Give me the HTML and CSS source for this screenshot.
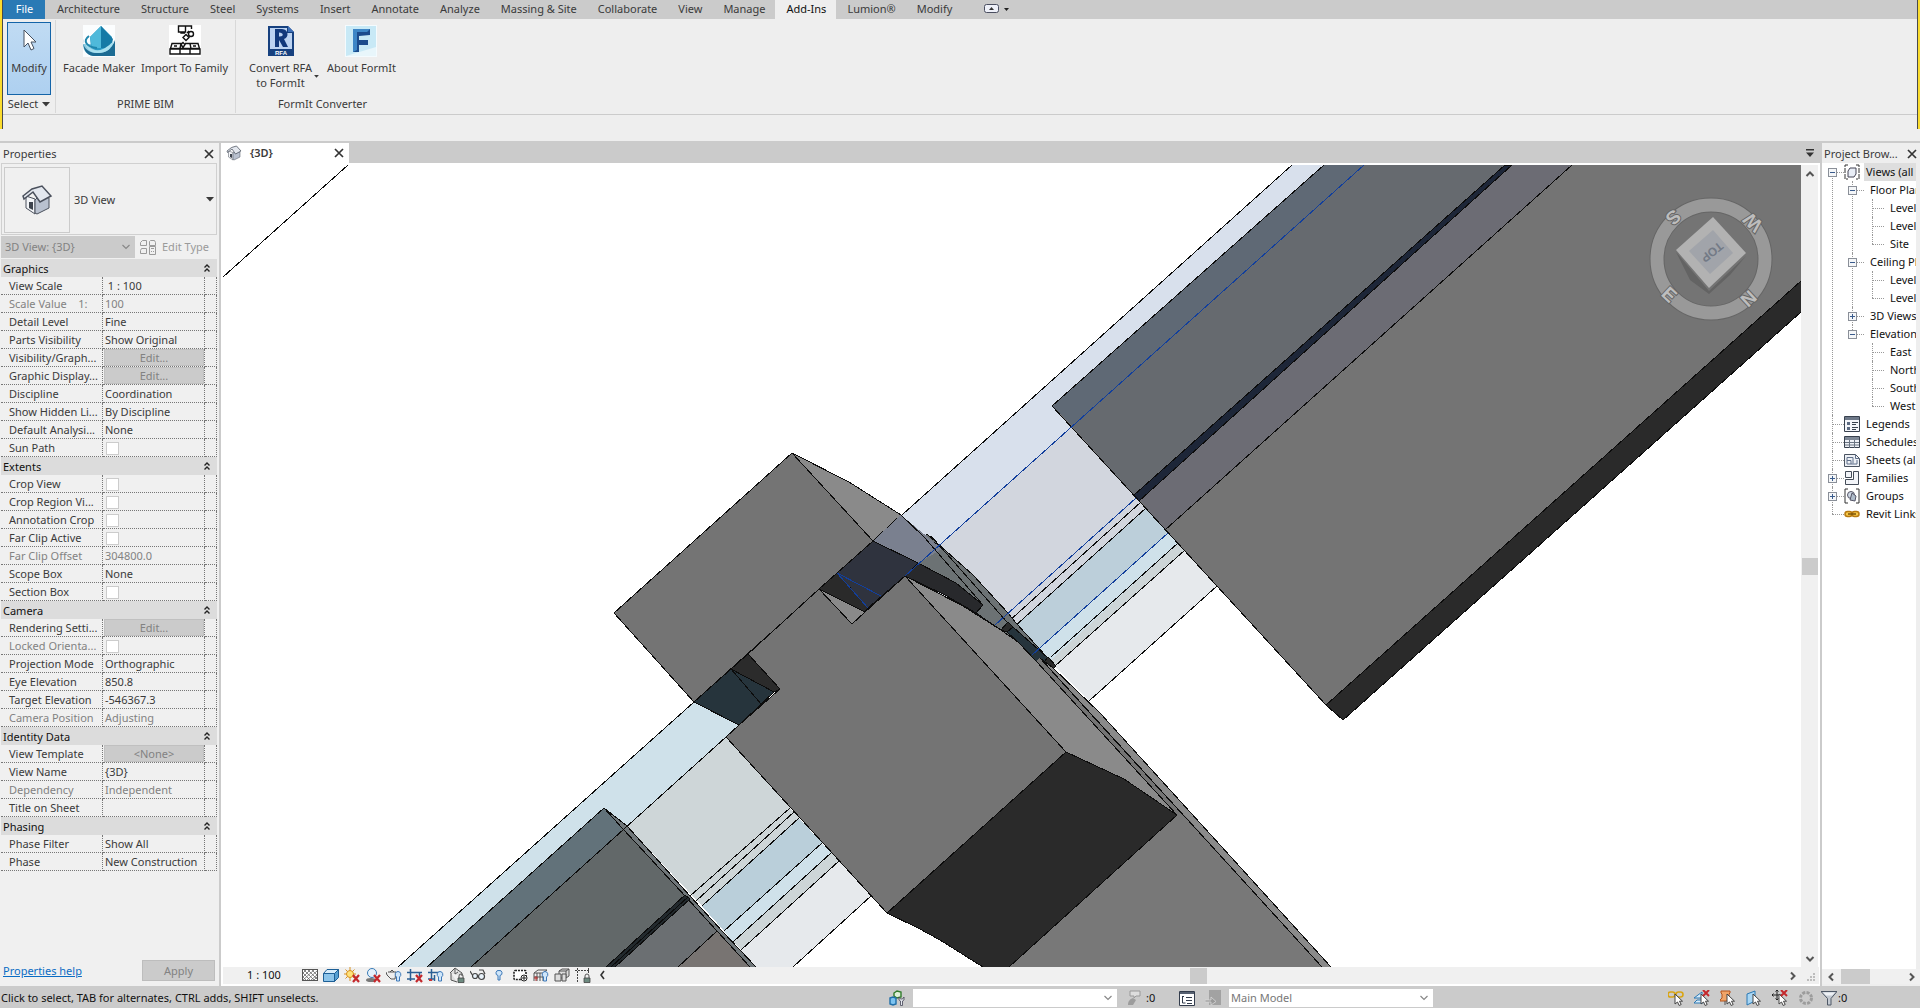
FILE: index.html
```html
<!DOCTYPE html>
<html lang="en">
<head>
  <meta charset="UTF-8">
  <meta name="viewport" content="width=device-width, initial-scale=1.0">
  <title>{3D}</title>
  <link rel="stylesheet" href="styles.css">
</head>
<body>
  <!-- Shared icon parts -->
  <svg class="defs" width="0" height="0" aria-hidden="true">
    <symbol id="house" viewBox="0 0 32 32">
      <path d="M5 12 14 15 14 30 5 24z" fill="#f3f5f8" stroke="#4a505c"/>
      <path d="M14 16 20 10 28 14 28 24 16 30 14 29z" fill="#b9c1cf" stroke="#4a505c"/>
      <path d="M2 12 11 5 21 2 30 12 19 18 12 8 3 15z" fill="#e3e7ee" stroke="#4a505c" stroke-width="1.5"/>
      <path d="M8 18h4v8l-4-2z" fill="#3e444e"/>
    </symbol>
    <symbol id="cross" viewBox="0 0 10 10"><path d="M1 1 9 9M9 1 1 9" stroke="currentColor" stroke-width="1.7" fill="none"/></symbol>
    <symbol id="chev" viewBox="0 0 10 10"><path d="M1.500 3 5 6.500 8.500 3" stroke="currentColor" stroke-width="1.200" fill="none"/></symbol>
    <symbol id="chev-bold" viewBox="0 0 10 10"><path d="M1.500 3 5 6.500 8.500 3" stroke="currentColor" stroke-width="2" fill="none"/></symbol>
    <symbol id="tri" viewBox="0 0 8 5"><path d="M0 0h8L4 4.500z" fill="currentColor"/></symbol>
    <symbol id="fold" viewBox="0 0 8 10"><path d="M1.500 4.500 4 2 6.500 4.500M1.500 8.500 4 6 6.500 8.500" stroke="#222" stroke-width="1.400" fill="none"/></symbol>
    <symbol id="redx" viewBox="0 0 16 16"><path d="M9 8l6 7M15 8l-6 7" stroke="#c4282c" stroke-width="2.200"/></symbol>
    <symbol id="pick" viewBox="0 0 16 16"><path d="M7 4v10l2.500-2 1.700 3.500 2-1-1.700-3.300h3z" fill="#fff" stroke="#444"/></symbol>
    <symbol id="bulb" viewBox="0 0 16 16"><path d="M12 4.500a3 3 0 0 1 1.500 5.500V14h-3v-4A3 3 0 0 1 12 4.500z" fill="#cfe6fa" stroke="#3c78b8"/></symbol>
    <symbol id="lock" viewBox="0 0 16 16"><path d="M10 11V9a2 2 0 0 1 4 0v2" fill="none" stroke="#555"/><path d="M9 11h6v4.500H9z" fill="#6d8a80" stroke="#444" stroke-width=".8"/></symbol>
  </svg>

  <header class="ribbon">
    <nav class="tabs">
      <button class="tab file">File</button>
      <button class="tab">Architecture</button>
      <button class="tab">Structure</button>
      <button class="tab">Steel</button>
      <button class="tab">Systems</button>
      <button class="tab">Insert</button>
      <button class="tab">Annotate</button>
      <button class="tab">Analyze</button>
      <button class="tab">Massing &amp; Site</button>
      <button class="tab">Collaborate</button>
      <button class="tab">View</button>
      <button class="tab">Manage</button>
      <button class="tab active">Add-Ins</button>
      <button class="tab">Lumion®</button>
      <button class="tab">Modify</button>
      <button class="tab minimize" aria-label="Minimize ribbon">
        <svg width="26" height="10" viewBox="0 0 26 10"><rect x=".5" y=".5" width="14" height="8" rx="2" fill="#eef0f8" stroke="#4a4e60"/><path d="M5 6h5L7.500 3z" fill="#333"/><path d="M20 4h5l-2.500 3z" fill="#222"/></svg>
      </button>
    </nav>

    <div class="panels">
      <div class="panel">
        <div class="tools">
          <button class="tool modify">
            <svg width="32" height="32" viewBox="0 0 32 32"><path d="M11 5v17l4-4 3 7 3-1.500-3-6.500h5z" fill="#fff" stroke="#46505e"/></svg>
            <span>Modify</span>
          </button>
        </div>
        <button class="panel-title drop">Select <svg width="8" height="5"><use href="#tri"/></svg></button>
      </div>
      <div class="panel">
        <div class="tools">
          <button class="tool">
            <svg width="32" height="32" viewBox="0 0 32 32">
              <rect width="32" height="32" fill="#fbfdfe"/>
              <path d="M0 19h32v12H10C4 30 0 26 0 19z" fill="#8fcbe0"/>
              <path d="M18 1 29 12 28 23 17 27 8 23 7 12z" fill="#2a9ac4"/>
              <path d="M18 1 30 14 28 23 18 23z" fill="#157aa6"/>
              <path d="M18 1 7 12 9 23 18 23z" fill="#4fb9da"/>
              <path d="M1 14c-3 9 6 15 16 14s13-8 15-13v16H10C3 30-1 24 1 14z" fill="#1c6b93"/>
              <path d="M2 18c4 7 12 9 18 6s8-6 11-8c-2 8-8 12-16 12S4 24 2 18z" fill="#a8e0ef"/>
              <path d="M6 11c-7 5-2 11 8 12" fill="none" stroke="#1f86ad" stroke-width="2"/>
            </svg>
            <span>Facade Maker</span>
          </button>
          <button class="tool">
            <svg width="32" height="32" viewBox="0 0 32 32">
              <rect width="32" height="32" fill="#fff"/>
              <g fill="none" stroke="#111" stroke-width="1.400">
                <path d="M9.500 1v6h7V1zM16.500 1h6v3M12 7v1h4"/>
                <circle cx="22" cy="9" r="2.500"/><path d="M17 9.500 20 12.500 17 15.500 14 12.500zM18 8l2-2"/>
                <path d="M3 18.500h9l-1 5H1.500zM12 19.500l2-2 2 2-2 3zM16 18.500h5l1 5H11M21 18.500h8l1.500 5H22M1 24h10v5H1zM11 24h10v5H11zM21 24h10v5H21zM5 21h3M24 21h3"/>
              </g>
            </svg>
            <span>Import To Family</span>
          </button>
        </div>
        <div class="panel-title">PRIME BIM</div>
      </div>
      <div class="panel last">
        <div class="tools">
          <button class="tool split">
            <svg width="32" height="32" viewBox="0 0 32 32">
              <path d="M3 1h20l6 6v24H3z" fill="#17417f"/><path d="M5 3h17v5h5v16H5z" fill="#bcd3f2"/><path d="M23 1v6h6z" fill="#3c6fb8"/>
              <path d="M10 4h7c7 0 7 9 2 10l4 8h-5l-4-7v7h-4zM14 7.500v4c5 .5 5-4 0-4z" fill="#12397c" fill-rule="evenodd"/>
              <text x="16" y="30" text-anchor="middle" class="rfa">RFA</text>
            </svg>
            <span>Convert RFA<br>to FormIt</span>
            <svg class="caret" width="5" height="3"><use href="#tri"/></svg>
          </button>
          <button class="tool">
            <svg width="32" height="32" viewBox="0 0 32 32">
              <rect width="32" height="32" fill="#f4fbfe"/><path d="M1 1h30v30H1z" fill="#c8e9f6"/><path d="M1 31 31 22v9z" fill="#e8f6fb"/>
              <path d="M8 4h17v6l-11 1v4h9v5h-9v7H8z" fill="#1b4b8c"/><path d="M8 4h17l-3 3H12v18l-4 2z" fill="#3d86c6"/>
            </svg>
            <span>About FormIt</span>
          </button>
        </div>
        <div class="panel-title">FormIt Converter</div>
      </div>
    </div>
  </header>

  <main class="workspace">
    <aside class="properties">
      <div class="palette-title"><span>Properties</span><button class="icon-btn" aria-label="Close properties"><svg width="10" height="10"><use href="#cross"/></svg></button></div>
      <button class="type-selector">
        <span class="thumb"><svg width="32" height="32"><use href="#house"/></svg></span>
        <span class="type-name">3D View</span>
        <svg width="8" height="5"><use href="#tri"/></svg>
      </button>
      <div class="instance">
        <div class="combo instance-combo">
          <select aria-label="Instance" disabled><option>3D View: {3D}</option></select>
          <svg width="10" height="10"><use href="#chev"/></svg>
        </div>
        <button class="edit-type" disabled>
          <svg width="17" height="17" viewBox="0 0 17 17" fill="none" stroke="#9a9a9a"><path d="M2.500 1.500h4v5h-6v-3zM10.500 1.500h4l1 2v3h-6v-4zM1.500 9.500h5v5h-6v-3zM9.500 7.500h6v8h-6zM11 9.500h3M11 12.500h1M13 12.500h1"/></svg>
          Edit Type
        </button>
      </div>

      <table class="props">
        <colgroup><col class="c-name"><col><col class="c-assoc"></colgroup>
        <tbody>
          <tr class="group"><th colspan="3"><button>Graphics<svg width="8" height="10"><use href="#fold"/></svg></button></th></tr>
          <tr><th>View Scale</th><td>&nbsp;1 : 100</td><td></td></tr>
          <tr class="off"><th>Scale Value &nbsp;&nbsp; 1:</th><td>100</td><td></td></tr>
          <tr><th>Detail Level</th><td>Fine</td><td></td></tr>
          <tr><th>Parts Visibility</th><td>Show Original</td><td></td></tr>
          <tr><th>Visibility/Graph...</th><td class="has-btn"><button disabled>Edit...</button></td><td></td></tr>
          <tr><th>Graphic Display...</th><td class="has-btn"><button disabled>Edit...</button></td><td></td></tr>
          <tr><th>Discipline</th><td>Coordination</td><td></td></tr>
          <tr><th>Show Hidden Li...</th><td>By Discipline</td><td></td></tr>
          <tr><th>Default Analysi...</th><td>None</td><td></td></tr>
          <tr><th><label for="sun">Sun Path</label></th><td><input type="checkbox" id="sun"></td><td></td></tr>
        </tbody>
        <tbody>
          <tr class="group"><th colspan="3"><button>Extents<svg width="8" height="10"><use href="#fold"/></svg></button></th></tr>
          <tr><th><label for="crop">Crop View</label></th><td><input type="checkbox" id="crop"></td><td></td></tr>
          <tr><th><label for="region">Crop Region Vi...</label></th><td><input type="checkbox" id="region"></td><td></td></tr>
          <tr><th><label for="anno">Annotation Crop</label></th><td><input type="checkbox" id="anno"></td><td></td></tr>
          <tr><th><label for="far">Far Clip Active</label></th><td><input type="checkbox" id="far"></td><td></td></tr>
          <tr class="off"><th>Far Clip Offset</th><td>304800.0</td><td></td></tr>
          <tr><th>Scope Box</th><td>None</td><td></td></tr>
          <tr><th><label for="section">Section Box</label></th><td><input type="checkbox" id="section"></td><td></td></tr>
        </tbody>
        <tbody>
          <tr class="group"><th colspan="3"><button>Camera<svg width="8" height="10"><use href="#fold"/></svg></button></th></tr>
          <tr><th>Rendering Setti...</th><td class="has-btn"><button disabled>Edit...</button></td><td></td></tr>
          <tr class="off"><th><label for="locked">Locked Orienta...</label></th><td><input type="checkbox" id="locked" disabled></td><td></td></tr>
          <tr><th>Projection Mode</th><td>Orthographic</td><td></td></tr>
          <tr><th>Eye Elevation</th><td>850.8</td><td></td></tr>
          <tr><th>Target Elevation</th><td>-546367.3</td><td></td></tr>
          <tr class="off"><th>Camera Position</th><td>Adjusting</td><td></td></tr>
        </tbody>
        <tbody>
          <tr class="group"><th colspan="3"><button>Identity Data<svg width="8" height="10"><use href="#fold"/></svg></button></th></tr>
          <tr><th>View Template</th><td class="has-btn"><button disabled>&lt;None&gt;</button></td><td></td></tr>
          <tr><th>View Name</th><td>{3D}</td><td></td></tr>
          <tr class="off"><th>Dependency</th><td>Independent</td><td></td></tr>
          <tr><th>Title on Sheet</th><td></td><td></td></tr>
        </tbody>
        <tbody>
          <tr class="group"><th colspan="3"><button>Phasing<svg width="8" height="10"><use href="#fold"/></svg></button></th></tr>
          <tr><th>Phase Filter</th><td>Show All</td><td></td></tr>
          <tr><th>Phase</th><td>New Construction</td><td></td></tr>
        </tbody>
      </table>

      <div class="props-footer">
        <a href="#help">Properties help</a>
        <button class="apply" disabled>Apply</button>
      </div>
    </aside>

    <section class="view">
      <div class="doc-tabs">
        <div class="doc-tab">
          <svg width="16" height="16"><use href="#house"/></svg>
          <b>{3D}</b>
          <button class="icon-btn" aria-label="Close view"><svg width="10" height="10"><use href="#cross"/></svg></button>
        </div>
        <button class="icon-btn tab-list" aria-label="Open views"><svg width="8" height="9" viewBox="0 0 8 9"><path d="M0 0h8v1.500H0zM0 3.500h8L4 8z" fill="#333"/></svg></button>
      </div>

      <div class="canvas-row">
        <svg class="canvas" viewBox="221 165 1580 802" preserveAspectRatio="xMinYMin slice">
          <rect x="221" y="165" width="1580" height="802" fill="#fff"/>
          <g class="model">
            <path class="edge" d="M223 277 348 165"/>

            <!-- glazing, upper right run -->
            <path fill="#d8e0ec" d="M873 541 1292 165H1364L905 576z"/>
            <path fill="#d2d6de" d="M905 576 1074 424 1146 508 1014 627 995 625z"/>
            <path fill="#bccfda" d="M1014 627 1146 508 1168 533 1032 655z"/>
            <path fill="#cfe1ea" d="M1032 655 1168 533 1178 543 1051 660z"/>
            <path fill="#cdd5d7" d="M1051 660 1178 543 1185 550 1055 666z"/>
            <path fill="#e6e9ec" d="M1055 666 1185 550 1217 586 1089 701z"/>
            <path class="edge" d="M1008 622 1141 502M1014 627 1146 508M1051 657 1178 543M1055 666 1185 550M1089 701 1217 586"/>

            <!-- upper right wall -->
            <path fill="#747474" d="M1052 406 1324 165H1801V281L1326 705z"/>
            <path fill="#666a6f" d="M1073 427 1364 165H1505L1135 497z"/>
            <path fill="#5f6975" d="M1052 406 1324 165H1364L1073 427z"/>
            <path fill="#6c6c74" d="M1140 500 1512 165H1572L1165 530z"/>
            <path fill="#1d2638" class="edge" d="M1134 495 1505 165H1512L1139 501z"/>
            <path fill="#2a2a2a" class="edge" d="M1326 705 1801 281V312L1343 720z"/>
            <path class="edge" d="M1324 165 1052 406 1326 705M1572 165 1165 530M873 541 1292 165"/>

            <!-- upper column -->
            <path fill="#747474" class="edge" d="M792 453 873 541 694 702 614 613z"/>
            <path fill="#8a8a8a" class="edge" d="M792 453 849 482 901 515 873 541z"/>
            <path fill="#6c7274" class="edge" d="M924 537 927 534 973 575 1008 613 1016 623 1056 667 1048 661 1036 661 1018 642 1001 630 976 613 983 605 956 583 918 563 940 546z"/>
            <path fill="#7a808f" d="M873 541 901 515 942 549 918 563z"/>
            <path class="edge" d="M901 515 924 537 983 605M931 536 1007 622M1008 613 1016 623"/>
            <path fill="#2f333e" class="edge" d="M837 573 873 541 918 563 905 576 868 608z"/>
            <path fill="#28292c" class="edge" d="M918 563 956 583 983 605 976 613 945 595 905 576z"/>
            <path fill="#2a2a2a" class="edge" d="M819 589 837 573 868 608 865 612z"/>
            <path fill="#8a8a8a" class="edge" d="M819 589 865 612 852 624z"/>
            <path fill="#2a2a2a" class="edge" d="M1001 630 1008 622 1013 627 1007 632z"/>
            <path fill="#26343c" class="edge" d="M1007 632 1013 627 1048 658 1045 663 1036 661 1018 642z"/>
            <path fill="#2a2a2a" class="edge" d="M1048 657 1056 666 1053 669 1044 662z"/>

            <!-- glazing, lower left run -->
            <path fill="#cfe1ea" d="M694 702 739 725 627 826 604 808 427 967H398z"/>
            <path fill="#ced6d8" d="M726 737 799 818 702 906 627 826z"/>
            <path fill="#bacfda" d="M799 818 822 843 724 931 702 906z"/>
            <path fill="#cfe1ea" d="M822 843 831 853 733 942 724 931z"/>
            <path fill="#cdd5d7" d="M831 853 839 861 741 950 733 942z"/>
            <path fill="#e6e9ec" d="M839 861 871 896 793 967H756L741 950z"/>
            <path class="edge" d="M694 702 398 967M790 808 690 896M794 812 696 901M799 818 702 906M822 843 724 931M831 853 733 942M839 861 741 950M871 896 793 967"/>

            <!-- lower left wall -->
            <path fill="#62727a" d="M604 808 623 829 471 967H427z"/>
            <path fill="#626869" d="M623 829 686 896 606 967H471z"/>
            <path fill="#6b6f72" d="M690 898 717 931 678 967H613z"/>
            <path fill="#787472" d="M717 931 750 967H678z"/>
            <path fill="#70777a" class="edge" d="M604 808 627 826 690 896 723 932 756 967H750L717 931 686 897 623 829z"/>
            <path fill="#22292d" class="edge" d="M685 895 690 899 615 967H606z"/>
            <path class="edge" d="M604 808 427 967M726 737 471 967M717 931 678 967M688 897 611 967"/>

            <!-- centre column -->
            <path fill="#747474" class="edge" d="M905 576 1066 752 887 913 726 737 739 725 780 689 748 654 819 589 852 624 865 612z"/>
            <path fill="#2b2b2b" class="edge" d="M731 669 748 654 780 689 774 692z"/>
            <path fill="#26343c" class="edge" d="M694 702 731 669 774 692 739 725z"/>
            <path class="edge" d="M731 669 762 705"/>
            <path fill="#8a8a8a" class="edge" d="M905 576 963 606 1001 630 1018 642 1036 661 1177 815 1124 779 1066 752z"/>
            <path fill="#747474" d="M1036 661 1040 658 1322 967H1316L1177 815z"/>
            <path fill="#8a8a8a" class="edge" d="M1040 658 1053 668 1100 713 1331 967H1322L1100 724z"/>
            <path fill="#787878" d="M1177 815 1009 967H1322L1182 812z"/>
            <path fill="#2a2a2a" class="edge" d="M1066 752 1124 779 1177 815 1009 967H983L940 940 918 928 887 913z"/>
            <path class="edge" d="M1036 661 1177 815M1040 658 1322 967"/>

            <path class="edge selected" d="M905 576 1364 165M995 625 1136 498M1032 655 1168 533M868 608 837 573 881 596"/>
          </g>

          <!-- view cube -->
          <g class="cube">
            <circle cx="1711" cy="259" r="54" fill="none" stroke="#666" stroke-width="15"/>
            <circle cx="1711" cy="259" r="54" fill="none" stroke="#999" stroke-width="13"/>
            <path d="M1676 252 1709 291 1746 256 1730 275 1709 294 1690 280z" fill="#636363"/>
            <path d="M1713 217 1746 253 1709 288 1676 250z" fill="#b2b2b2"/>
            <path d="M1713 230 1733 253 1710 274 1689 251z" fill="#a1a4aa"/>
            <text class="face" transform="translate(1712 252) rotate(141)" y="4">TOP</text>
            <text transform="translate(1673 217) rotate(137)" y="6">S</text>
            <text transform="translate(1753 222) rotate(-137)" y="6">W</text>
            <text transform="translate(1749 299) rotate(-43)" y="6">N</text>
            <text transform="translate(1669 295) rotate(43)" y="6">E</text>
          </g>
        </svg>
        <div class="scroll vertical">
          <button aria-label="Scroll up"><svg class="up" width="10" height="10"><use href="#chev-bold"/></svg></button>
          <div class="track"><div class="grip"></div></div>
          <button aria-label="Scroll down"><svg width="10" height="10"><use href="#chev-bold"/></svg></button>
        </div>
      </div>

      <div class="view-bar">
        <button class="scale">1 : 100</button>
        <div class="view-icons">
          <button aria-label="Detail level"><svg viewBox="0 0 16 16"><rect x=".5" y="2.500" width="15" height="11" fill="#fff" stroke="#555"/><path d="M1 6 4 3M1 10 8 3M1 13 12 3M5 13 15 4M9 13 15 8M12 13l3-3M1 10l3 3M1 6l7 7M2 3l10 10M6 3l9 9M10 3l5 5" stroke="#666" stroke-width=".8"/></svg></button>
          <button aria-label="Visual style"><svg viewBox="0 0 16 16" stroke="#1d5f96"><path d="M.5 6.500h11v8H.5z" fill="#8cc4ea"/><path d="M.5 6.500 4 2.500h11.500l-4 4z" fill="#d8edfb"/><path d="M11.500 6.500l4-4v8l-4 4z" fill="#559fd2"/></svg></button>
          <button aria-label="Sun path off"><svg viewBox="0 0 16 16"><path d="M6 0v14M0 7h12M1.500 2.500l9 9M10.500 2.500l-9 9" stroke="#d89020"/><circle cx="6" cy="7" r="3.500" fill="#ffe27a" stroke="#d89020"/><use href="#redx"/></svg></button>
          <button aria-label="Shadows off"><svg viewBox="0 0 16 16"><ellipse cx="6" cy="13" rx="5" ry="2" fill="#777"/><circle cx="7" cy="6" r="4.500" fill="#e4f2fc" stroke="#3a7ab5"/><use href="#redx"/></svg></button>
          <button aria-label="Rendering dialog"><svg viewBox="0 0 16 16"><path d="M2 5h8l-1 7H5L1 8 0 5M4 5l2-2 2 2" fill="#eee" stroke="#555"/><use href="#bulb"/></svg></button>
          <button aria-label="Crop view"><svg viewBox="0 0 16 16"><path d="M0 5.500h15M3.500 2v12M3.500 5.500h9V12M0 12h8" fill="none" stroke="#2b5f94" stroke-width="1.500"/><use href="#redx"/></svg></button>
          <button aria-label="Crop region"><svg viewBox="0 0 16 16"><path d="M0 5.500h12M3.500 2v12M6.500 8v6M0 12h7" fill="none" stroke="#2b5f94" stroke-width="1.500"/><path d="M1 13h3" stroke="#c33" stroke-width="2"/><use href="#bulb"/></svg></button>
          <button aria-label="Lock 3D view"><svg viewBox="0 0 16 16"><path d="M1 6 6 1l7 5v3M2 6v7l6 2M6 2v5l3-2" fill="#ddd" stroke="#555"/><use href="#lock"/></svg></button>
          <button aria-label="Temporary hide"><svg viewBox="0 0 16 16" fill="#e8f2fa" stroke="#444" stroke-width="1.200"><path d="M0 4l3 5M9 3h4l2 4" fill="none"/><circle cx="5" cy="9" r="2.500"/><circle cx="11.500" cy="9.500" r="3"/></svg></button>
          <button aria-label="Reveal hidden"><svg viewBox="0 0 16 16"><path d="M8 3.500a2.500 2.500 0 0 1 1 5V13H7V8.500a2.500 2.500 0 0 1 1-5z" fill="#cfe6fa" stroke="#3c78b8"/></svg></button>
          <button aria-label="Temporary view properties"><svg viewBox="0 0 16 16"><rect x="2" y="3.500" width="12" height="9" rx="1" fill="#fff" stroke="#222" stroke-width="1.600" stroke-dasharray="2 1"/><circle cx="12" cy="11" r="3" fill="#fff" stroke="#222"/><path d="M12 9v4M10 11h4" stroke="#222"/></svg></button>
          <button aria-label="Analytical model"><svg viewBox="0 0 16 16"><path d="M1 6 5 3h9M1 6h9v8M1 6v8M4 6v8M7 6v8M10 6l4-3M1 10h9" fill="none" stroke="#555"/><path d="M1 11h4M3 9v5" stroke="#b33"/><use href="#bulb"/></svg></button>
          <button aria-label="Highlight displacement"><svg viewBox="0 0 16 16" fill="#ddd" stroke="#555"><path d="M5 4l3-2h7v7l-3 2H5zM5 4h7v7M12 4l3-2"/><path d="M1 7h6v7H1zM8 7h4v7H8z"/></svg></button>
          <button aria-label="Reveal constraints"><svg viewBox="0 0 16 16"><path d="M0 3.500h15M2.500 1v14M13.500 1v6" fill="none" stroke="#444" stroke-dasharray="2 1"/><use href="#lock"/></svg></button>
          <button aria-label="Less"><svg viewBox="0 0 16 16"><path d="M8 4 5 8l3 4" fill="none" stroke="#333" stroke-width="1.600"/></svg></button>
        </div>
        <div class="scroll horizontal">
          <div class="track"><div class="grip"></div></div>
          <button aria-label="Scroll right"><svg class="right" width="10" height="10"><use href="#chev-bold"/></svg></button>
        </div>
        <svg class="size-grip" width="9" height="9" viewBox="0 0 9 9" fill="#bdbdbd"><path d="M6 0h2v2H6zM3 3h2v2H3zM6 3h2v2H6zM0 6h2v2H0zM3 6h2v2H3zM6 6h2v2H6z"/></svg>
      </div>
    </section>

    <aside class="browser">
      <div class="palette-title"><span>Project Brow...</span><button class="icon-btn" aria-label="Close browser"><svg width="10" height="10"><use href="#cross"/></svg></button></div>
      <div class="tree-box">
        <ul class="tree">
          <li>
            <div class="node sel"><button class="toggle" aria-label="Collapse"></button><svg viewBox="0 0 16 16"><path d="M4 1H1v14h3M12 1h3v14h-3" fill="none" stroke="#333" stroke-dasharray="5 1"/><path d="M4 7l2-3h6v6l-2 3H4z" fill="#e8edf6" stroke="#445"/></svg><span>Views (all</span></div>
            <ul>
              <li><div class="node"><button class="toggle" aria-label="Collapse"></button><span>Floor Plans</span></div>
                <ul><li><div class="node"><span>Level 1</span></div></li><li><div class="node"><span>Level 2</span></div></li><li><div class="node"><span>Site</span></div></li></ul></li>
              <li><div class="node"><button class="toggle" aria-label="Collapse"></button><span>Ceiling Plans</span></div>
                <ul><li><div class="node"><span>Level 1</span></div></li><li><div class="node"><span>Level 2</span></div></li></ul></li>
              <li><div class="node"><button class="toggle plus" aria-label="Expand"></button><span>3D Views</span></div></li>
              <li><div class="node"><button class="toggle" aria-label="Collapse"></button><span>Elevations</span></div>
                <ul><li><div class="node"><span>East</span></div></li><li><div class="node"><span>North</span></div></li><li><div class="node"><span>South</span></div></li><li><div class="node"><span>West</span></div></li></ul></li>
            </ul>
          </li>
          <li><div class="node"><svg viewBox="0 0 16 16"><path d="M.5 .5h15v15H.5z" fill="#f4f6fa" stroke="#38414e"/><path d="M1 1h14v3H1z" fill="#6d7888"/><path d="M3 6h3v3H3zM3 11h3v3H3z" fill="#5c6b82"/><path d="M8 6.500h6M8 8.500h4M8 11.500h6M8 13.500h4" stroke="#38414e"/></svg><span>Legends</span></div></li>
          <li><div class="node"><svg viewBox="0 0 16 16"><path d="M.5 2.500h15v11H.5z" fill="#eef1f6" stroke="#38414e"/><path d="M1 3h14v3H1z" fill="#7e8896"/><path d="M1 8.500h14M1 11h14M5.500 6v8M10.500 6v8" stroke="#6a7482"/></svg><span>Schedules/Quantities</span></div></li>
          <li><div class="node"><svg viewBox="0 0 16 16"><path d="M.5 2.500h11l4 4v8H.5z" fill="#eef1f6" stroke="#4a5360"/><path d="M11.500 2.500v4h4M3 5.500h6v6M3 8.500h4v3.500M3 5.500V12h10V8" fill="none" stroke="#60708a"/></svg><span>Sheets (all)</span></div></li>
          <li><div class="node"><button class="toggle plus" aria-label="Expand"></button><svg viewBox="0 0 16 16" fill="#f2f4f8" stroke="#444c58"><path d="M1.500 1.500h6v6h-6zM9.500 1.500h5v13h-13v-5h8z"/></svg><span>Families</span></div></li>
          <li><div class="node"><button class="toggle plus" aria-label="Expand"></button><svg viewBox="0 0 16 16"><path d="M4 1H1v14h3M12 1h3v14h-3" fill="none" stroke="#333"/><circle cx="7" cy="7" r="3.500" fill="#d0dae6" stroke="#556"/><path d="M8 5l4 3-1 5-5-1z" fill="#aebccb" stroke="#556"/></svg><span>Groups</span></div></li>
          <li><div class="node"><svg viewBox="0 0 16 16" fill="#f6c84a" stroke="#b87a10" stroke-width="1.500"><rect x="1" y="5.500" width="7" height="5" rx="2.500"/><rect x="8" y="5.500" width="7" height="5" rx="2.500"/><path d="M4 8h8" stroke="#7a5208"/></svg><span>Revit Links</span></div></li>
        </ul>
      </div>
      <div class="scroll browser-scroll">
        <button aria-label="Scroll left"><svg class="left" width="10" height="10"><use href="#chev-bold"/></svg></button>
        <div class="track"><div class="grip"></div></div>
        <button aria-label="Scroll right"><svg class="right" width="10" height="10"><use href="#chev-bold"/></svg></button>
      </div>
    </aside>
  </main>

  <footer class="status">
    <span class="hint">Click to select, TAB for alternates, CTRL adds, SHIFT unselects.</span>
    <div class="status-mid">
      <button aria-label="Worksets"><svg viewBox="0 0 16 16"><path d="M5 3l3-2 4 1v5L8 8 5 6z" fill="#dff0d8" stroke="#2f7a2a" stroke-width="1.400"/><path d="M1 8l3-1 3 1v6l-3 1-3-1z" fill="#7cc3f0" stroke="#1f6ea8" stroke-width="1.400"/><path d="M10 7v3l1.500 1v4.500h2V11L15 10V7l-1.500 2h-2z" fill="#e4e8ee" stroke="#445" stroke-width=".8"/></svg></button>
      <div class="combo"><select aria-label="Active workset"><option></option></select><svg width="10" height="10"><use href="#chev"/></svg></div>
      <button class="requests" aria-label="Editing requests"><svg viewBox="0 0 16 16"><path d="M4 1h10v5h-4l-2 2V6H4z" fill="#ddd" stroke="#999"/><path d="M2 15c0-4 2-6 5-7l3 2-3 5z" fill="#9c9c9c"/></svg></button>
      <span class="count">:0</span>
      <button aria-label="Design options"><svg viewBox="0 0 16 16"><path d="M.5 1.500h15v14H.5z" fill="#fff" stroke="#333c4c"/><path d="M1 2h14v2H1z" fill="#566070"/><path d="M3 6.500h2M3.500 7v6h3M7 7.500h6M7 10.500h6M8 13.500h5" fill="none" stroke="#333c4c"/></svg></button>
      <button class="to-set" aria-label="Add to set"><svg viewBox="0 0 16 16"><path d="M4 0h12v15H4z" fill="#a2a2a2"/><path d="M0 10h6V7l5 4.500L6 15v-3H0z" fill="#999" stroke="#d8d8d8" stroke-width=".8"/></svg></button>
      <div class="combo"><select aria-label="Design option"><option>Main Model</option></select><svg width="10" height="10"><use href="#chev"/></svg></div>
    </div>
    <div class="status-right">
      <button aria-label="Select links"><svg viewBox="0 0 16 16"><rect x="0" y="2" width="7" height="5" rx="2.500" fill="none" stroke="#d9a514" stroke-width="1.600"/><rect x="8" y="2" width="7" height="5" rx="2.500" fill="none" stroke="#d9a514" stroke-width="1.600"/><use href="#pick"/></svg></button>
      <button aria-label="Select underlay"><svg viewBox="0 0 16 16"><path d="M0 8l8-6v6zM0 13l3-3h6v3z" fill="#d8ecfa" stroke="#2a78b4"/><use href="#pick"/><path d="M9 0l6 6M15 0 9 6" stroke="#c4282c" stroke-width="2"/></svg></button>
      <button aria-label="Select pinned"><svg viewBox="0 0 16 16"><path d="M1 1h9v2L9 4v4l2 2v1H0v-1l2-2V4L1 3z" fill="#f0a468" stroke="#b4521a"/><path d="M5 11v4" stroke="#555"/><use href="#pick"/></svg></button>
      <button aria-label="Select by face"><svg viewBox="0 0 16 16"><path d="M1 4l8-3v10l-8 4z" fill="#a8d6f4" stroke="#2a78b4"/><use href="#pick"/></svg></button>
      <button aria-label="Drag on selection"><svg viewBox="0 0 16 16"><path d="M5 0v10M0 5h10M3.500 1.500 5 0l1.500 1.500M3.500 8.500 5 10l1.500-1.500M1.500 3.500 0 5l1.500 1.500" fill="none" stroke="#222"/><use href="#pick"/><path d="M9 0l6 6M15 0 9 6" stroke="#c4282c" stroke-width="2"/></svg></button>
      <button aria-label="Background processes"><svg viewBox="0 0 16 16"><circle cx="8" cy="8" r="5.500" fill="none" stroke="#9c9c9c" stroke-width="3" stroke-dasharray="3 1.300"/></svg></button>
      <button class="filter" aria-label="Filter"><svg viewBox="0 0 16 16"><path d="M0 1.500h16l-6 7V15H6.500V8.500z" fill="#c4cad2" stroke="#4e5866"/><path d="M2 2.500h12l-3 3H5z" fill="#eef1f5"/></svg></button>
      <span class="count">:0</span>
    </div>
  </footer>
</body>
</html>
```
FILE: styles.css
```css
:root {
  --bar: #cbcbcb;
  --panel: #eeeeee;
  --text: #3a3a3a;
  --muted: #828282;
}
* { box-sizing: border-box; margin: 0; padding: 0; }
body {
  font-family: "Noto Sans", "Open Sans", sans-serif;
  font-size: 11px;
  line-height: 16px;
  color: var(--text);
  background: var(--panel);
  height: 100vh;
  display: flex; flex-direction: column;
  overflow: hidden;
}
button, select, input { font: inherit; color: inherit; }
button { background: none; border: none; }
svg { display: block; flex: none; }
.defs { position: absolute; }
ul { list-style: none; }

/* Ribbon */
.ribbon {
  height: 129px;
  margin-bottom: 12px;
  border: solid #fbdc2e; border-width: 0 2px;
  box-shadow: inset 1px 0 #4a4a4a, inset -1px 0 #4a4a4a;
  padding: 0 1px;
}
.tabs { display: flex; height: 19px; background: var(--bar); }
.tab { padding: 0 10px 2px 11px; white-space: nowrap; }
.tab.file { background: #2a7ab5; color: #fff; width: 42px; margin-right: 1px; }
.tab.active { background: var(--panel); color: #111; }
.tab.minimize { padding-left: 22px; }

.panels { display: flex; height: 96px; border-bottom: 1px solid var(--bar); }
.panel {
  display: flex; flex-direction: column; align-items: center;
  border-right: 1px solid #d8d8d8;
  padding: 2px 4px 0;
  margin: 1px 0;
}
.panel.last { border: none; padding-left: 10px; }
.tools { display: flex; height: 73px; }
.tool {
  display: flex; flex-direction: column; align-items: center;
  padding: 3px 3px 0;
  line-height: 15px;
  position: relative;
}
.tool span { margin-top: 3px; white-space: nowrap; }
.tool.modify {
  width: 44px; height: 73px;
  background: linear-gradient(#c0dbf3, #aed0f0);
  border: 1px solid #1464a8;
  padding: 2px 0 0;
}
.tool.split { margin-right: 9px; }
.caret { position: absolute; right: -4px; top: 53px; }
.rfa { font: bold 6px "Liberation Sans", sans-serif; fill: #fff; }
.panel-title { line-height: 18px; white-space: nowrap; }
.panel-title.drop { display: flex; align-items: center; gap: 4px; }

/* Workspace */
.workspace {
  flex: 1; min-height: 0;
  display: grid; grid-template-columns: 221px minmax(0, 1fr) 100px;
  border-top: 2px solid var(--bar);
}
.palette-title {
  display: flex; justify-content: space-between; align-items: center;
  height: 20px; padding: 1px 3px 0 2px;
  white-space: nowrap;
}
.icon-btn { color: #333; }

.properties {
  display: flex; flex-direction: column;
  background: #f0f0f0;
  border-right: 2px solid var(--bar);
  padding: 0 2px 0 1px;
}
.type-selector {
  display: flex; align-items: center;
  height: 72px; padding: 3px 2px 2px 2px;
  border: 1px solid #d0d0d0;
}
.thumb {
  width: 66px; height: 66px;
  display: flex; align-items: center; justify-content: center;
  border: 1px solid var(--bar);
}
.type-name { flex: 1; text-align: left; padding-left: 4px; }
.instance { display: flex; align-items: center; gap: 5px; height: 24px; }
.edit-type { display: flex; align-items: center; gap: 5px; color: #9a9a9a; white-space: nowrap; }

.combo { position: relative; }
.combo select {
  appearance: none;
  width: 100%; height: 100%;
  border: none; background: #fff;
  padding-left: 2px;
  color: #777;
}
.combo svg { position: absolute; right: 4px; top: 50%; margin-top: -5px; color: #888; pointer-events: none; }
.instance-combo { width: 134px; height: 22px; }
.instance-combo select { background: var(--bar); color: var(--muted); opacity: 1; padding-left: 4px; }

/* Property grid */
.props { width: 216px; table-layout: fixed; border-spacing: 0; }
.c-name { width: 102px; }
.c-assoc { width: 12px; }
.props tr { height: 18px; }
.props th, .props td {
  height: 18px;
  font-weight: normal; text-align: left; line-height: 17px;
  border-bottom: 1px dotted #777; border-right: 1px dotted #777;
  white-space: nowrap; overflow: hidden;
}
.props th { padding-left: 8px; }
.props td { padding-left: 2px; }
.props .off { color: var(--muted); }
.props .group th { padding: 0; border: none; background: #dcdcdc; color: #111; }
.props .group button {
  display: flex; justify-content: space-between; align-items: center;
  width: 100%; height: 18px; padding: 0 6px 0 2px;
}
.props .has-btn { padding: 0 0 0 1px; }
.props .has-btn button {
  display: block; width: 100%; height: 17px; line-height: 15px;
  background: var(--bar); color: var(--muted);
  border: 1px solid #c0c0c0;
}
.props input {
  appearance: none; display: block;
  width: 13px; height: 13px; margin: 2px 0 0 1px;
  background: #fff; border: 1px solid #ccc;
}
.props-footer {
  margin-top: auto; padding: 0 2px 5px 2px;
  display: flex; justify-content: space-between; align-items: center;
}
.props-footer a { color: #0a6cc4; }
.apply {
  width: 73px; height: 21px;
  background: var(--bar); border: 1px solid #bdbdbd; color: var(--muted);
}

/* Document view */
.view { display: flex; flex-direction: column; background: #fff; min-height: 0; padding-bottom: 2px; }
.doc-tabs { display: flex; justify-content: space-between; height: 20px; background: var(--bar); margin-bottom: 2px; }
.doc-tab { display: flex; align-items: center; width: 128px; padding: 0 5px; background: #fff; }
.doc-tab b { flex: 1; padding-left: 8px; font-weight: 600; }
.tab-list { padding: 0 6px; }
.canvas-row { flex: 1; min-height: 0; display: flex; }
.canvas { flex: 1; min-width: 0; height: 100%; }
.model { shape-rendering: crispEdges; fill: none; }
.edge { stroke: #0c0c0c; stroke-width: 1; }
.selected { stroke: #123f9c; }
.cube text {
  font: bold 19px "Liberation Sans", sans-serif;
  fill: #bdbdbd; stroke: #666; stroke-width: 2; paint-order: stroke;
  text-anchor: middle;
}
.cube .face { font-size: 12px; fill: #737a86; stroke: none; }

.scroll { display: flex; background: #f0f0f0; color: #555; }
.scroll button { display: flex; align-items: center; justify-content: center; width: 17px; height: 17px; }
.track { flex: 1; display: flex; align-items: center; justify-content: center; }
.grip { background: var(--bar); }
.vertical { flex-direction: column; width: 17px; margin-right: 2px; }
.vertical .grip { width: 16px; height: 17px; }
.horizontal { flex: 1; }
.horizontal .grip { width: 17px; height: 16px; }
.up { transform: rotate(180deg); }
.left { transform: rotate(90deg); }
.right { transform: rotate(-90deg); }

.view-bar { display: flex; align-items: center; height: 17px; background: #f0f0f0; margin: 0 1px 0 2px; }
.scale { width: 79px; padding: 0 0 1px 3px; color: #111; }
.view-icons { display: flex; gap: 5px; padding-bottom: 1px; }
.view-icons svg { width: 16px; height: 16px; }
.size-grip { margin: 4px 3px 0 6px; }

/* Project browser */
.browser { display: flex; flex-direction: column; border-left: 2px solid var(--bar); min-height: 0; padding-bottom: 2px; }
.tree-box { flex: 1; background: #fff; overflow: hidden; margin-right: 4px; }
.tree { padding-left: 2px; color: #111; }
.tree li { position: relative; padding-left: 20px; }
.tree li::before {
  content: ""; position: absolute; left: 8px; top: 0; bottom: 0;
  border-left: 1px dotted #999;
}
.tree li::after {
  content: ""; position: absolute; left: 8px; top: 9px; width: 12px;
  border-top: 1px dotted #999;
}
.tree li:last-child::before { bottom: auto; height: 9px; }
.tree > li:first-child::before { top: 9px; }
.node { display: flex; align-items: center; height: 18px; white-space: nowrap; }
.node > svg { width: 16px; height: 16px; }
.node span { margin-left: 4px; padding: 0 2px; }
.node.sel span { background: #dedede; flex: 1; line-height: 18px; }
.toggle {
  position: absolute; left: 4px; top: 5px; z-index: 1;
  width: 9px; height: 9px;
  border: 1px solid #8a8f98;
  background: linear-gradient(#3a5b8c, #3a5b8c) center / 5px 1px no-repeat, #f4f6f8;
}
.toggle.plus {
  background: linear-gradient(#3a5b8c, #3a5b8c) center / 5px 1px no-repeat, linear-gradient(#3a5b8c, #3a5b8c) center / 1px 5px no-repeat, #f4f6f8;
}
.browser-scroll { height: 15px; }
.browser-scroll button { height: 15px; }
.browser-scroll .track { justify-content: flex-start; }
.browser-scroll .grip { width: 29px; height: 15px; margin-left: 2px; }

/* Status bar */
.status {
  display: grid; grid-template-columns: minmax(0, 47fr) auto minmax(0, 12fr) auto;
  align-items: center;
  height: 22px;
  padding-top: 2px;
  background: var(--bar);
  color: #111;
}
.hint { padding-left: 1px; white-space: nowrap; }
.status svg { width: 16px; height: 16px; }
.status-mid { display: flex; align-items: center; }
.status-mid .combo { width: 204px; height: 18px; margin: 0 8px; }
.status .combo svg { width: 10px; height: 10px; }
.requests { margin-left: 1px; }
.count { width: 37px; padding-left: 4px; }
.to-set { margin-left: 10px; }
.status-right { grid-column: 4; display: flex; align-items: center; gap: 10px; }
.status-right .filter { margin-left: -3px; }
.status-right .count { width: 82px; padding: 0; margin-left: -9px; }
```
